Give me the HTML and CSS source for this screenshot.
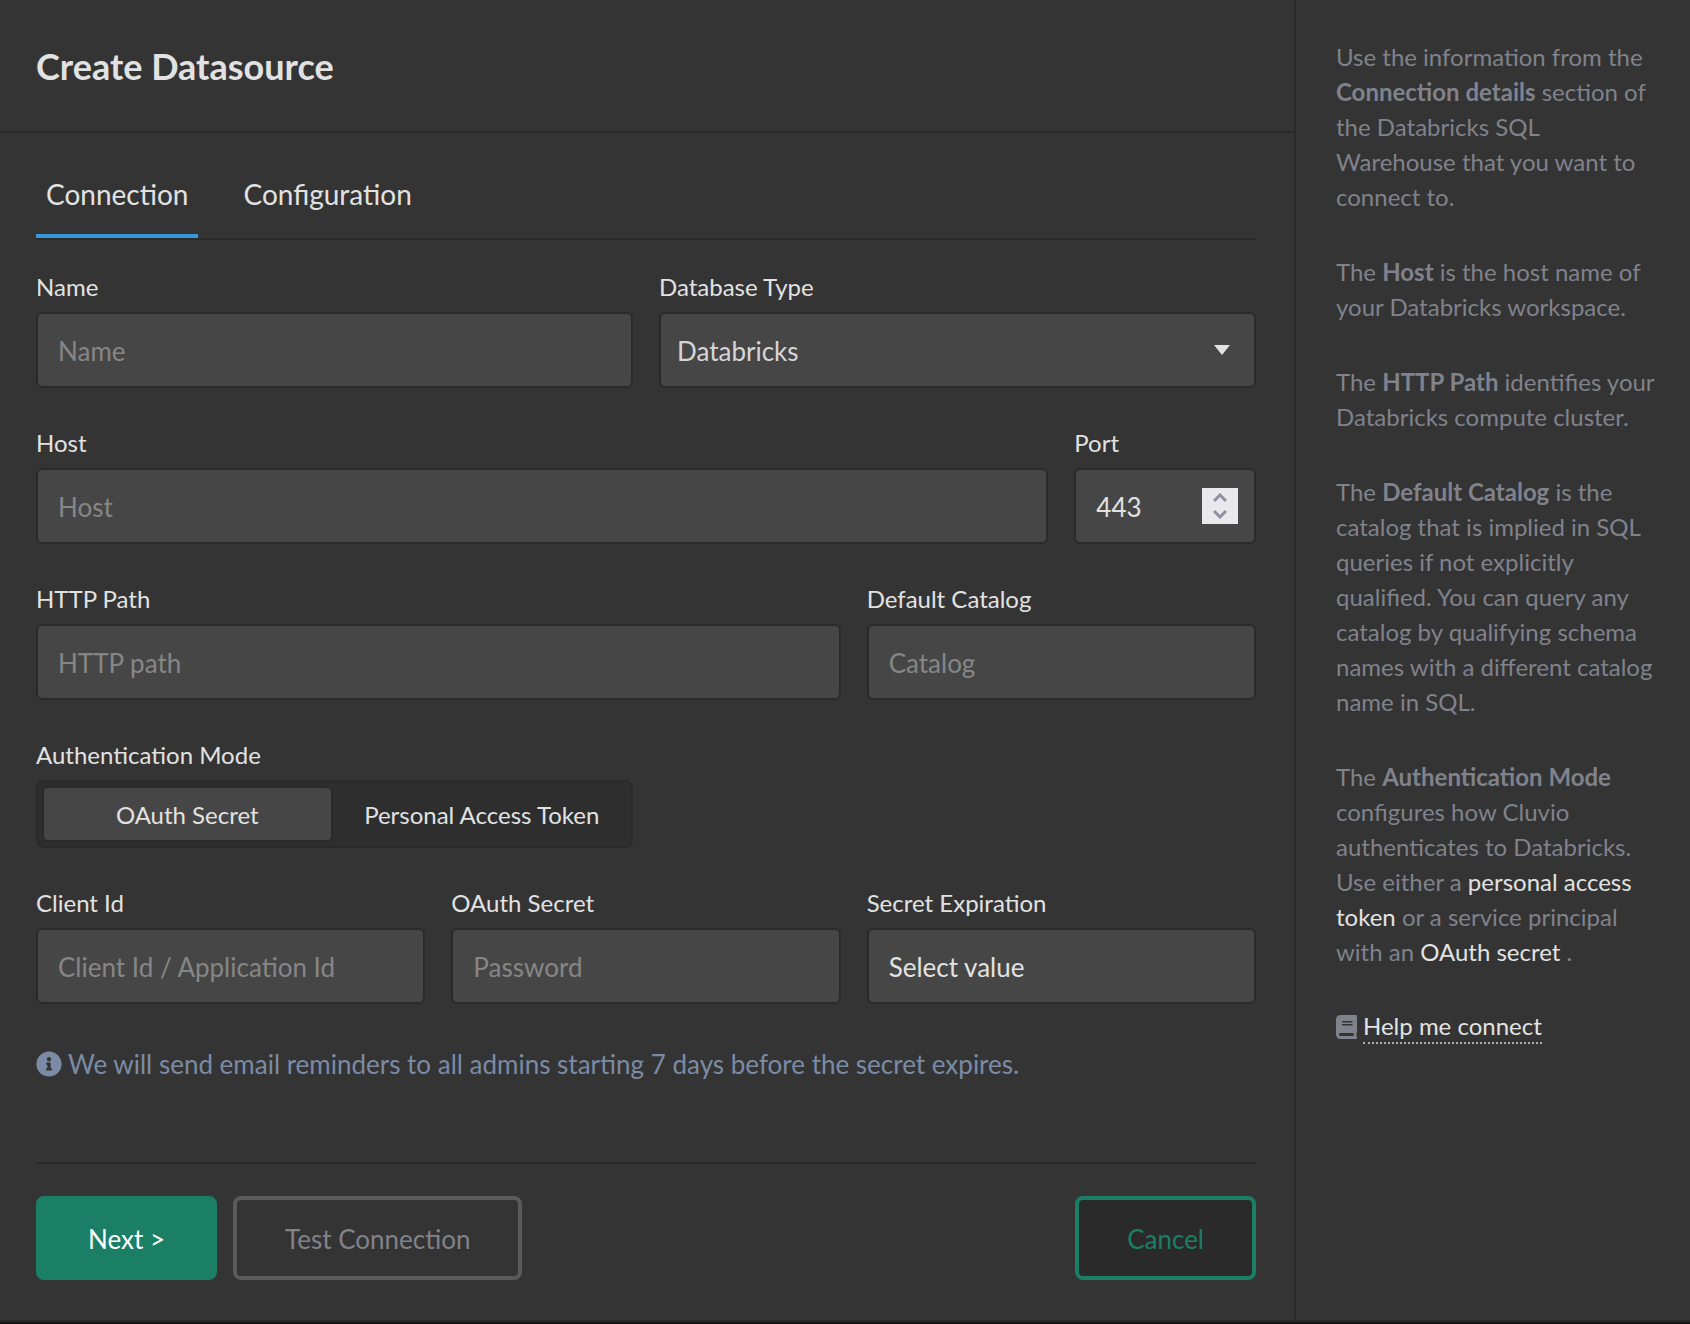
FILE: index.html
```html
<!DOCTYPE html>
<html lang="en">
<head>
    <meta charset="UTF-8">
    <meta name="viewport" content="width=device-width, initial-scale=1.0">
    <title>Create Datasource</title>
    <link rel="stylesheet" href="styles.css">
</head>
<body>
    <div class="page">
        <main class="main">
            <header class="header">
                <h1>Create Datasource</h1>
            </header>

            <form class="content" onsubmit="return false">
                <nav class="tabs">
                    <a href="#connection" class="tab active">Connection</a>
                    <a href="#configuration" class="tab">Configuration</a>
                </nav>

                <div class="fields">
                    <div class="field span-3">
                        <label for="name">Name</label>
                        <input type="text" id="name" class="control" placeholder="Name">
                    </div>
                    <div class="field span-3">
                        <label for="dbType">Database Type</label>
                        <div class="control-wrap">
                            <select id="dbType" class="control db-type">
                                <option selected>Databricks</option>
                            </select>
                            <svg class="caret" width="16" height="10" viewBox="0 0 16 10"><path d="M0 0h16L8 10z"/></svg>
                        </div>
                    </div>

                    <div class="field span-5">
                        <label for="host">Host</label>
                        <input type="text" id="host" class="control" placeholder="Host">
                    </div>
                    <div class="field span-1">
                        <label for="port">Port</label>
                        <div class="control-wrap">
                            <input type="number" id="port" class="control" value="443">
                            <div class="spinner">
                                <button type="button" aria-label="Increase port" onclick="port.stepUp()">
                                    <svg width="14" height="9" viewBox="0 0 14 9"><path d="M1 8l6-6 6 6"/></svg>
                                </button>
                                <button type="button" aria-label="Decrease port" onclick="port.stepDown()">
                                    <svg width="14" height="9" viewBox="0 0 14 9"><path d="M1 1l6 6 6-6"/></svg>
                                </button>
                            </div>
                        </div>
                    </div>

                    <div class="field span-4">
                        <label for="httpPath">HTTP Path</label>
                        <input type="text" id="httpPath" class="control" placeholder="HTTP path">
                    </div>
                    <div class="field span-2">
                        <label for="catalog">Default Catalog</label>
                        <input type="text" id="catalog" class="control" placeholder="Catalog">
                    </div>

                    <div class="field span-3">
                        <span class="label" id="authLabel">Authentication Mode</span>
                        <div class="segmented" role="group" aria-labelledby="authLabel">
                            <button type="button" class="segment active">OAuth Secret</button>
                            <button type="button" class="segment">Personal Access Token</button>
                        </div>
                    </div>

                    <div class="field span-2 new-row">
                        <label for="clientId">Client Id</label>
                        <input type="text" id="clientId" class="control" placeholder="Client Id / Application Id">
                    </div>
                    <div class="field span-2">
                        <label for="secret">OAuth Secret</label>
                        <input type="password" id="secret" class="control" placeholder="Password">
                    </div>
                    <div class="field span-2">
                        <label for="expiration">Secret Expiration</label>
                        <select id="expiration" class="control">
                            <option selected>Select value</option>
                        </select>
                    </div>
                </div>

                <p class="info">
                    <svg width="26" height="26" viewBox="0 0 512 512"><path d="M256 8C119 8 8 119 8 256s111 248 248 248 248-111 248-248S393 8 256 8zm0 110c23 0 42 19 42 42s-19 42-42 42-42-19-42-42 19-42 42-42zm56 254c0 7-5 12-12 12h-88c-7 0-12-5-12-12v-24c0-7 5-12 12-12h12v-64h-12c-7 0-12-5-12-12v-24c0-7 5-12 12-12h64c7 0 12 5 12 12v100h12c7 0 12 5 12 12v24z"/></svg>
                    <span>We will send email reminders to all admins starting 7 days before the secret expires.</span>
                </p>

                <div class="actions">
                    <button type="submit" class="btn btn-primary">Next &gt;</button>
                    <button type="button" class="btn btn-test" disabled>Test Connection</button>
                    <button type="button" class="btn btn-cancel">Cancel</button>
                </div>
            </form>
        </main>

        <aside class="help">
            <p>Use the information from the <b>Connection details</b> section of the Databricks SQL Warehouse that you want to connect to.</p>
            <p>The <b>Host</b> is the host name of your Databricks workspace.</p>
            <p>The <b>HTTP Path</b> identifies your Databricks compute cluster.</p>
            <p>The <b>Default Catalog</b> is the catalog that is implied in SQL queries if not explicitly qualified. You can query any catalog by qualifying schema names with a different catalog name in SQL.</p>
            <p>The <b>Authentication Mode</b> configures how Cluvio authenticates to Databricks. Use either a <a href="#token">personal access token</a> or a service principal with an <a href="#oauth">OAuth secret</a> .</p>
            <div class="help-link">
                <svg width="21" height="24" viewBox="0 0 448 512"><path d="M448 360V24c0-13-11-24-24-24H96C43 0 0 43 0 96v320c0 53 43 96 96 96h328c13 0 24-11 24-24v-16c0-8-4-14-9-19-4-15-4-59 0-74 5-5 9-11 9-19zM128 134c0-3 3-6 6-6h212c3 0 6 3 6 6v20c0 3-3 6-6 6H134c-3 0-6-3-6-6v-20zm0 64c0-3 3-6 6-6h212c3 0 6 3 6 6v20c0 3-3 6-6 6H134c-3 0-6-3-6-6v-20zm253 250H96c-18 0-32-14-32-32s14-32 32-32h285c-2 17-2 47 0 64z"/></svg>
                <a href="#help">Help me connect</a>
            </div>
        </aside>
    </div>
</body>
</html>
```
FILE: styles.css
```css
* {
    box-sizing: border-box;
}

body {
    margin: 0;
    font-family: Lato, sans-serif;
    font-size: 24px;
    color: #e2e2e2;
    background-color: #343434;
    border-bottom: 2px solid #151515;
}

.page {
    display: flex;
    min-height: calc(100vh - 2px);
    border-bottom: 2px solid #2a2a2a;
}

.main {
    flex: 1;
    min-width: 0;
}

.header {
    padding: 44px 36px 43px;
    border-bottom: 2px solid #2a2a2a;
}

h1 {
    margin: 0;
    font-size: 36px;
    line-height: 44px;
}

.content {
    padding: 32px 38px 40px 36px;
}

/* Tabs */
.tabs {
    display: flex;
    gap: 35px;
    margin-bottom: 32px;
    border-bottom: 2px solid #2a2a2a;
}

.tab {
    padding: 11px 10px 22px;
    border-bottom: 4px solid transparent;
    font-size: 28px;
    line-height: 36px;
    color: inherit;
    text-decoration: none;
}

.tab.active {
    border-bottom-color: #3498db;
}

/* Form fields */
.fields {
    display: grid;
    grid-template-columns: repeat(6, 1fr);
    column-gap: 26px;
    row-gap: 40px;
}

.field {
    min-width: 0;
}

.span-2 { grid-column: span 2; }
.span-3 { grid-column: span 3; }
.span-4 { grid-column: span 4; }
.span-5 { grid-column: span 5; }
.new-row { grid-column: 1 / span 2; }

label, .label {
    display: block;
    margin-bottom: 10px;
    line-height: 30px;
}

.control {
    display: block;
    width: 100%;
    height: 76px;
    padding: 2px 20px 0;
    border: 2px solid #2a2a2a;
    border-radius: 6px;
    background-color: #464646;
    font-family: inherit;
    font-size: 26px;
    color: #e2e2e2;
    appearance: none;
}

.control::placeholder {
    color: #868686;
}

.control-wrap {
    position: relative;
}

.db-type {
    padding: 2px 16px 0;
    color: #d6d6d6;
}

.caret {
    position: absolute;
    top: 33px;
    right: 26px;
    fill: #e2e2e2;
    pointer-events: none;
}

input[type="number"]::-webkit-inner-spin-button {
    display: none;
}

.spinner {
    position: absolute;
    top: 20px;
    right: 18px;
    display: flex;
    flex-direction: column;
    justify-content: space-between;
    width: 36px;
    height: 36px;
    padding: 5px 0;
    background-color: #e9e9ed;
}

.spinner button {
    display: flex;
    justify-content: center;
    padding: 0;
    border: none;
    background: none;
}

.spinner path {
    fill: none;
    stroke: #8f8f9d;
    stroke-width: 3;
}

.segmented {
    display: flex;
    gap: 4px;
    height: 68px;
    padding: 4px;
    border: 2px solid #2a2a2a;
    border-radius: 8px;
    background-color: #2e2e2e;
}

.segment {
    flex: 1 1 0;
    padding: 0;
    border: 2px solid transparent;
    border-radius: 6px;
    background: none;
    font-family: inherit;
    font-size: 24px;
    color: inherit;
}

.segment.active {
    border-color: #2a2a2a;
    background-color: #464646;
}

.info {
    display: flex;
    align-items: center;
    gap: 6px;
    margin: 44px 0 82px;
    font-size: 26px;
    line-height: 32px;
    color: #7b8ba5;
}

.info svg {
    flex: none;
    fill: #7b8ba5;
}

/* Buttons */
.actions {
    display: flex;
    gap: 16px;
    padding-top: 32px;
    border-top: 2px solid #2a2a2a;
}

.btn {
    height: 84px;
    padding: 2px 48px 0;
    border: 4px solid #1a7f65;
    border-radius: 8px;
    font-family: inherit;
    font-size: 26px;
    cursor: pointer;
}

.btn-primary {
    background-color: #1a7f65;
    color: #ffffff;
}

.btn-test {
    border-color: #5a5a5a;
    background: none;
    color: #82828a;
}

.btn-cancel {
    margin-left: auto;
    background-color: #2a2a2a;
    color: #1a7f65;
}

/* Help sidebar */
.help {
    flex: 0 0 396px;
    padding: 39px 30px 40px 40px;
    border-left: 2px solid #2a2a2a;
    line-height: 35px;
    color: #80828c;
}

.help p {
    margin: 0 0 40px;
}

.help a {
    color: #e2e2e2;
    text-decoration: none;
}

.help-link {
    display: flex;
    align-items: center;
    gap: 6px;
}

.help-link svg {
    fill: #80828c;
}

.help-link a {
    line-height: 33px;
    border-bottom: 2px dotted #b0b0b0;
}
```
